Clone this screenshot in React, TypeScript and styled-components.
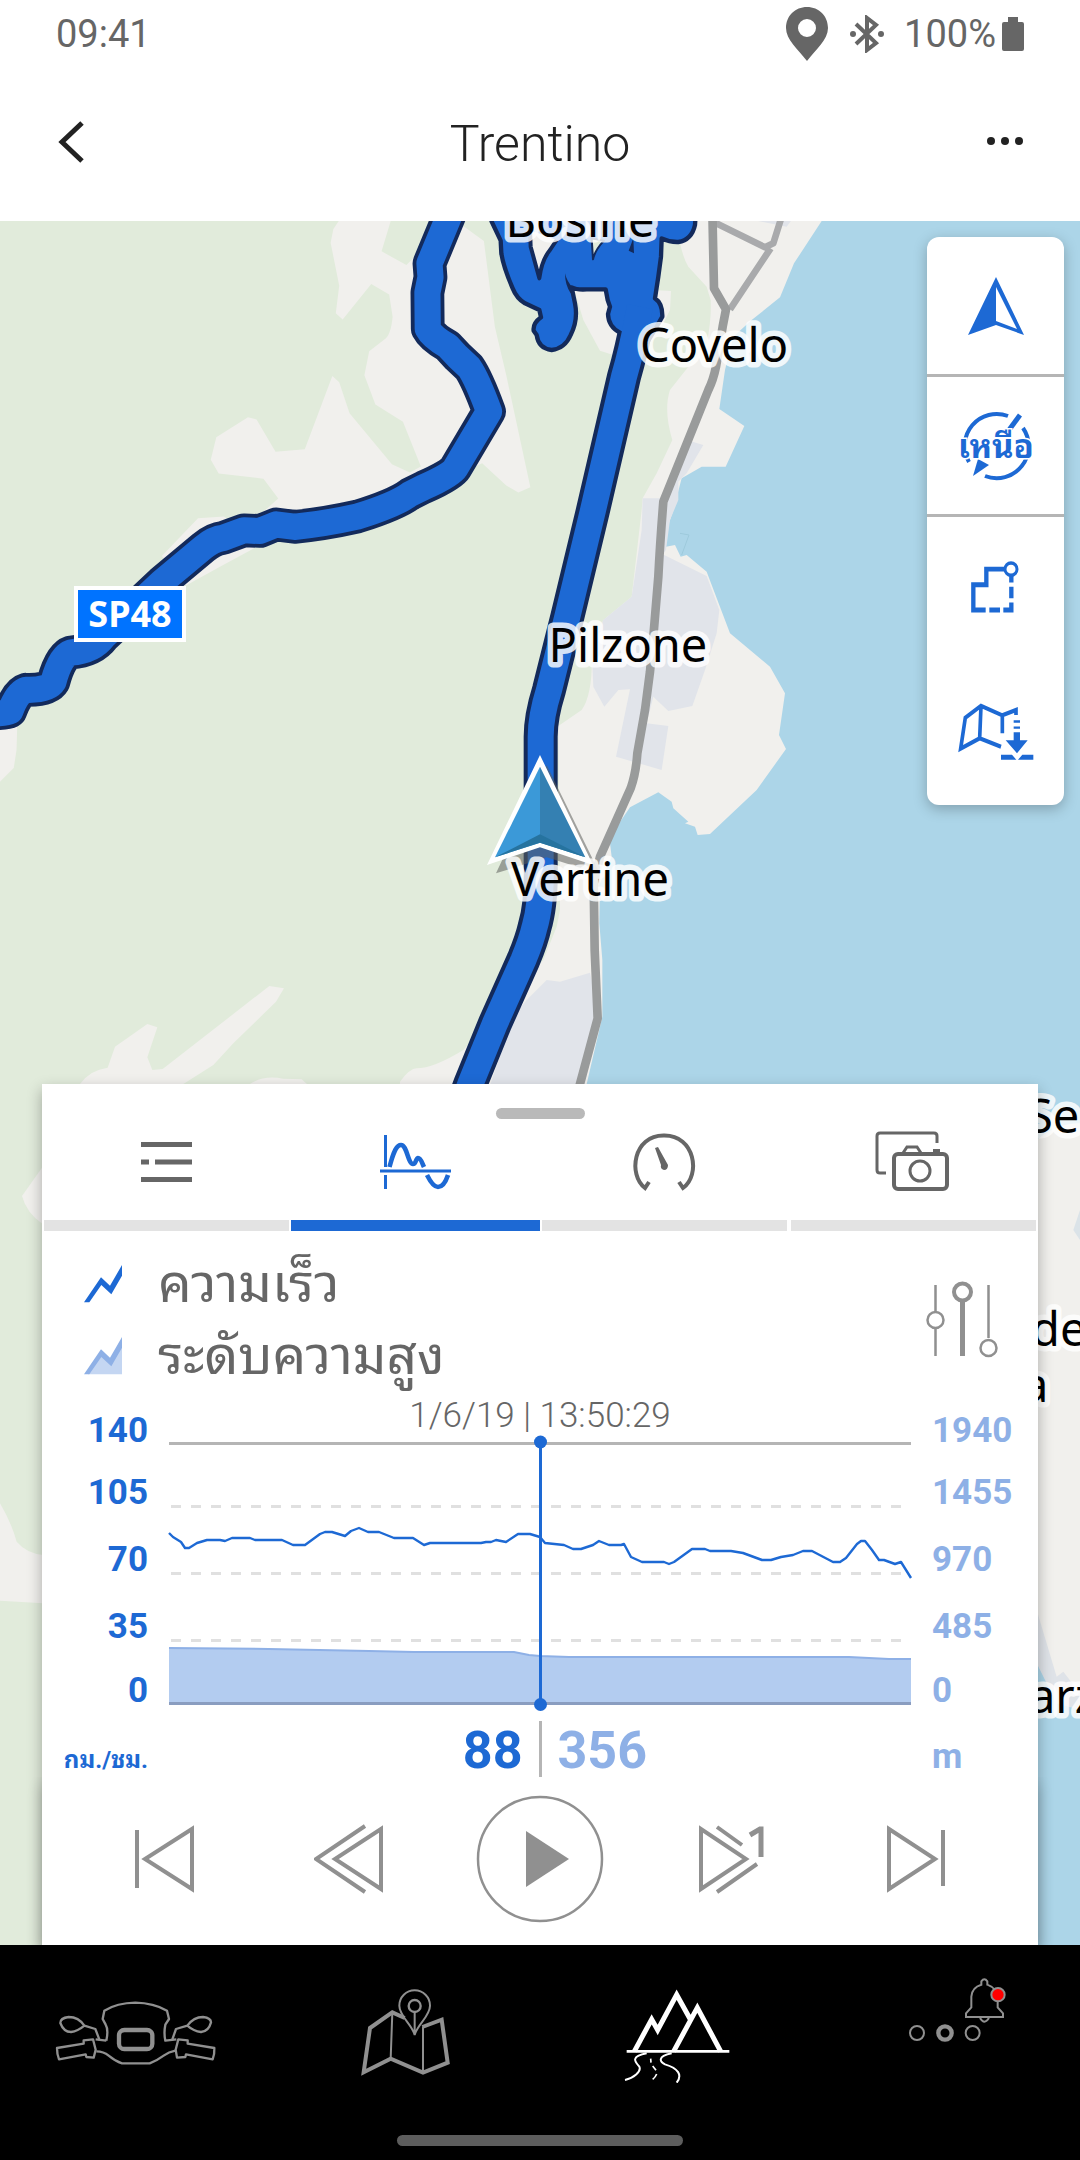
import React from "react";
import styled, { createGlobalStyle } from "styled-components";

const blue = "#1d69d4";
const paleBlue = "#8eb0e6";
const grey = "#666666";
const midGrey = "#909090";

const GlobalStyle = createGlobalStyle`
  *, *::before, *::after { box-sizing: border-box; }
  body {
    margin: 0;
    background: #ffffff;
    font-family: Roboto, "Noto Sans", "Noto Sans Thai Looped", Loma, Garuda, "Noto Sans Thai", sans-serif;
  }
  button { font: inherit; color: inherit; background: none; border: 0; padding: 0; margin: 0; cursor: pointer; }
  svg { display: block; }
`;

const Page = styled.div`
  min-height: 100vh;
  display: flex;
  flex-direction: column;
`;

const StatusBar = styled.div`
  height: 67px;
  flex: none;
  padding: 0 56px;
  display: flex;
  align-items: center;
  justify-content: space-between;
  color: ${grey};
  font-size: 38px;
  font-weight: 400;
`;

const StatusIcons = styled.div`
  display: flex;
  align-items: center;
`;

const BatteryText = styled.span`
  margin: 0 6px 0 20px;
`;

const Header = styled.header`
  height: 154px;
  flex: none;
  padding: 0 52px;
  display: grid;
  grid-template-columns: 80px 1fr 80px;
  align-items: center;
`;

const Title = styled.h1`
  margin: 0;
  text-align: center;
  font-size: 50px;
  line-height: 60px;
  font-weight: 300;
  color: #222222;
`;

const HeaderButton = styled.button<{ $end?: boolean }>`
  height: 80px;
  display: flex;
  align-items: center;
  justify-content: ${(p) => (p.$end ? "flex-end" : "flex-start")};
`;

const Stage = styled.main`
  position: relative;
  flex: 1;
  display: flex;
  flex-direction: column;
  justify-content: space-between;
  overflow: hidden;
`;

const MapCanvas = styled.svg`
  position: absolute;
  inset: 0;
  width: 100%;
  height: 100%;
  font-family: "Noto Sans", sans-serif;
`;

const Toolbar = styled.div`
  position: relative;
  align-self: flex-end;
  width: 137px;
  margin: 16px 16px 80px;
  padding-bottom: 8px;
  background: #ffffff;
  border-radius: 12px;
  box-shadow: 0 4px 14px rgba(0, 0, 0, 0.25);
`;

const ToolButton = styled.button<{ $divided?: boolean }>`
  width: 100%;
  height: 140px;
  display: flex;
  align-items: center;
  justify-content: center;
  color: ${blue};
  border-bottom: ${(p) => (p.$divided ? "3px solid #b5b5b5" : "0")};
`;

const Sheet = styled.section`
  position: relative;
  margin: 0 42px;
  background: #ffffff;
  box-shadow: 0 6px 14px rgba(0, 0, 0, 0.3);
`;

const Handle = styled.div`
  padding-top: 24px;
  display: flex;
  justify-content: center;
  &::after {
    content: "";
    width: 89px;
    height: 11px;
    border-radius: 6px;
    background: #b9b9b9;
  }
`;

const Tabs = styled.div`
  display: grid;
  grid-template-columns: repeat(4, 1fr);
`;

const Tab = styled.button<{ $active?: boolean }>`
  height: 112px;
  display: flex;
  flex-direction: column;
  align-items: center;
  justify-content: space-between;
  padding-top: 12px;
  color: ${(p) => (p.$active ? blue : grey)};
  &::after {
    content: "";
    height: 11px;
    align-self: stretch;
    margin: ${(p) => (p.$active ? "0" : "0 2px")};
    background: ${(p) => (p.$active ? blue : "#e3e3e3")};
  }
`;

const LegendBar = styled.div`
  padding: 17px 40px 0 42px;
  display: flex;
  align-items: center;
  justify-content: space-between;
`;

const LegendList = styled.ul`
  margin: 0;
  padding: 0;
  list-style: none;
`;

const LegendItem = styled.li`
  height: 72px;
  display: flex;
  align-items: center;
  gap: 36px;
  font-size: 53px;
  line-height: 72px;
  font-weight: 400;
  color: ${grey};
`;

const Chart = styled.div`
  margin-top: 6px;
  display: grid;
  grid-template-columns: 106px 1fr 106px;
  column-gap: 21px;
`;

const Scale = styled.div<{ $pale?: boolean }>`
  display: grid;
  grid-template-rows: 51px 62px 67px 67px 64px;
  align-items: end;
  text-align: ${(p) => (p.$pale ? "left" : "right")};
  color: ${(p) => (p.$pale ? paleBlue : blue)};
  font-size: 35px;
  line-height: 36px;
  font-weight: 700;
`;

const PlotColumn = styled.div`
  min-width: 0;
`;

const Moment = styled.div`
  text-align: center;
  font-size: 35px;
  line-height: 36px;
  font-weight: 300;
  color: ${grey};
`;

const Plot = styled.svg`
  width: 100%;
  height: 278px;
  overflow: visible;
`;

const Values = styled.div`
  margin-top: 9px;
  height: 56px;
  display: grid;
  grid-template-columns: 106px 1fr 3px 1fr 106px;
  align-items: baseline;
  font-weight: 700;
`;

const Unit = styled.span<{ $pale?: boolean; $small?: boolean }>`
  font-size: ${(p) => (p.$small ? "24px" : "35px")};
  line-height: 60px;
  text-align: ${(p) => (p.$pale ? "left" : "right")};
  color: ${(p) => (p.$pale ? paleBlue : blue)};
`;

const Reading = styled.span<{ $pale?: boolean }>`
  font-size: 52px;
  line-height: 60px;
  padding: 0 16px;
  text-align: ${(p) => (p.$pale ? "left" : "right")};
  color: ${(p) => (p.$pale ? paleBlue : blue)};
`;

const Divider = styled.span`
  align-self: stretch;
  background: #b5b5b5;
`;

const Playback = styled.div`
  height: 168px;
  padding: 0 29px 4px;
  display: grid;
  grid-template-columns: repeat(5, 1fr);
  align-items: center;
  background: #ffffff;
  box-shadow: 0 8px 14px rgba(0, 0, 0, 0.2);
  clip-path: inset(0 -20px);
`;

const PlayButton = styled.button`
  display: flex;
  justify-content: center;
  color: ${midGrey};
`;

const NavBar = styled.nav`
  flex: none;
  background: #000000;
  display: flex;
  flex-direction: column;
  align-items: center;
  padding-bottom: 14px;
  &::after {
    content: "";
    width: 286px;
    height: 11px;
    margin-top: 14px;
    border-radius: 6px;
    background: #5d5d5d;
  }
`;

const NavItems = styled.div`
  align-self: stretch;
  height: 176px;
  display: grid;
  grid-template-columns: repeat(4, 1fr);
`;

const NavButton = styled.button<{ $active?: boolean }>`
  display: flex;
  align-items: center;
  justify-content: center;
  color: ${(p) => (p.$active ? "#ffffff" : midGrey)};
`;

type GlyphProps = { box: string; w: number; h: number; children: React.ReactNode };

/* Line icon drawn with the current text colour. */
const Glyph = ({ box, w, h, children }: GlyphProps) => (
  <svg viewBox={box} width={w} height={h} fill="none" stroke="currentColor" aria-hidden="true">
    {children}
  </svg>
);

const westRoad =
  "M1315 -10 L1298 32 L1247 155 L1250 195 L1241 240 L1242 345 Q1255 370 1300 395 L1328 425 L1362 457 Q1385 490 1420 585 L1322 750 Q1310 770 1230 805 L1190 825 Q1150 855 1038 890 Q940 912 855 920 L802 913 L755 932 L708 930 L648 952 Q620 955 590 980 L470 1080 L300 1240 Q270 1280 205 1285 Q175 1295 155 1370 Q140 1395 75 1393 Q50 1400 30 1455 Q10 1465 -60 1460";
const lakeRoad =
  "M600 290 L592 330 Q575 420 552 500 L458 905 L382 1220 L327 1440 Q302 1520 302 1580 L302 1960 Q305 2080 284 2150 Q275 2190 250 2250 L165 2440 L91 2622 L40 2760";
const mainStreet =
  "M817 0 L822 235 L858 298 L848 350 L828 470 Q820 510 805 540 L670 875 Q660 1000 655 1100 L640 1280 L630 1385 L615 1500 L592 1630 Q588 1690 572 1735 L480 1940 L461 2020 L464 2220 L473 2425 L420 2622 L380 2760";

const mapLabels = [
  { text: "Bosine", x: 580, y: 237 },
  { text: "Covelo", x: 714, y: 362 },
  { text: "Pilzone", x: 628, y: 662 },
  { text: "Vertine", x: 590, y: 896 },
];

const edgeLabels = [
  { text: "Se", x: 1027, y: 1133 },
  { text: "de", x: 1031, y: 1346 },
  { text: "a", x: 1022, y: 1402 },
  { text: "arz", x: 1029, y: 1713 },
];

const TripMap = () => (
  <MapCanvas viewBox="0 221 1080 1724" preserveAspectRatio="xMidYMin slice" role="img" aria-label="Trentino">
    <rect x="0" y="221" width="1080" height="1724" fill="#e1ebdb" />
    <g transform="translate(0 210) scale(0.3444)" fill="#f1f0ed">
      <path d="M985 30 L968 55 L960 95 L985 220 L975 300 L995 318 L1078 215 L1130 245 L1140 310 Q1135 365 1115 377 L1072 410 L1058 480 L1090 565 L1170 615 L1222 745 L1190 762 L1138 738 L1015 590 L985 500 L965 482 L885 695 L800 702 L745 608 L720 602 L628 660 L612 725 L635 765 L765 780 L808 838 L760 880 L850 930 L1200 830 L1400 735 L1470 800 L1505 820 L1540 805 L1470 480 L1437 340 L1405 90 L1350 50 L1300 30 L1240 100 L1180 160 L1108 120 L1135 30Z" />
      <path d="M470 1005 L575 895 L650 890 L760 970 L640 1035 L540 1090Z" />
      <path d="M0 1500 L50 1500 L48 1568 L40 1620 L0 1660Z" />
    </g>
    <g transform="translate(0 950) scale(0.33333)" fill="#f1f0ed">
      <path d="M240 402 Q270 360 323 353 L345 290 L442 222 L472 232 L442 322 L457 360 L488 357 L808 108 L852 115 L828 155 L700 280 L640 345 L550 402 L400 520Z" />
      <path d="M750 402 Q790 375 850 386 L905 388 L930 410Z" />
      <path d="M128 650 L66 738 Q80 790 128 822Z" />
      <path d="M0 1660 Q35 1720 50 1775 Q80 1810 130 1815 L130 1960 L0 1952Z" />
    </g>
    <g transform="translate(440 210) scale(0.33333)">
      <path fill="#acd5e8" d="M1100 0 H1920 V5205 H420 V2622 L480 2020 L500 1700 L620 1100 L650 880 L760 700 L840 480 L850 300Z" />
      <path fill="#f1f0ed" d="M1165 0 L1145 33 L1062 160 L1020 262 L935 330 L880 380 L855 480 L838 597 L913 648 L857 770 L785 770 L725 805 L700 900 L680 960 L678 1010 L705 1005 L722 1040 L740 1035 L800 1085 L870 1270 L990 1370 L1035 1450 L1017 1575 L1038 1617 L950 1740 L810 1872 L773 1875 L765 1850 L735 1840 L745 1835 L700 1795 L695 1775 L655 1747 L570 1792 L520 1865 L510 1900 L515 1940 L480 2020 L478 2140 L487 2250 L487 2420 L440 2622 L420 2900 L-130 2900 L-120 2615 Q-90 2575 -70 2575 Q-20 2575 70 2520 L310 2250 L350 2150 L360 2100 L355 1548 L425 1500 Q460 1450 455 1320 L490 1230 L575 1160 L605 900 L608 865 L650 790 L697 690 Q670 600 690 540 L745 470 L800 400 Q815 330 812 270 L800 230 L745 170 Q720 130 710 30 V0Z" />
      <path fill="#f1f0ed" d="M400 230 L500 240 L560 340 L540 370 L520 435 L480 422 L430 330Z M640 240 L693 243 L690 300 L660 360Z" />
      <path fill="#f1f0ed" d="M1790 2790 Q1850 2740 1920 2740 V4500 L1875 4480 L1810 4380 L1790 4360Z" />
      <path fill="#dbe3e8" d="M1920 3000 L1900 3060 L1920 3090Z" />
      <path fill="#dfe3e8" d="M1790 4200 L1850 4400 L1870 4385 L1920 4450 V4500 L1850 4480 L1790 4360Z" />
      <path fill="#e1e4ea" d="M740 690 L790 705 L740 790 L715 815 L715 870 L690 930 L678 1020 L668 1033 L800 1098 L838 1200 L830 1270 L795 1380 L757 1488 L685 1503 L640 1460 L620 1540 L685 1548 L665 1680 L528 1640 L570 1438 L535 1440 L493 1490 L460 1430 L455 1320 L490 1230 L575 1160 L605 960 L608 865 L660 865Z" />
      <path fill="#e1e4ea" d="M320 2310 L360 2315 L450 2288 L480 2420 L430 2640 L145 2640 L220 2420 L260 2370Z M940 30 L1055 30 L1040 50Z" />
      <g fill="none" strokeLinejoin="round">
        <path d="M720 970 L747 975 L725 1035" stroke="#9ecadc" strokeWidth="3" />
        <path d="M815 33 L975 112 L1000 100 L1025 20 M992 115 L870 298" stroke="#a9aaac" strokeWidth="20" />
        <path d={mainStreet} stroke="#999b9b" strokeWidth="26" />
      </g>
    </g>
    <g fill="none" strokeLinejoin="round">
      <g transform="translate(0 210) scale(0.3444)">
        <path d={westRoad} stroke="#132a5b" strokeWidth="98" />
        <path d={westRoad} stroke={blue} strokeWidth="76" />
      </g>
      <g transform="translate(440 210) scale(0.33333)">
        <path d={lakeRoad} stroke="#132a5b" strokeWidth="102" />
        <path
          d="M145 0 L155 35 L182 92 L184 130 Q190 170 218 235 Q230 265 255 280 L298 300 L303 322 Q278 340 281 362 L290 375 Q295 415 335 420 Q375 415 392 375 Q415 330 405 280 L395 232 Q410 240 440 238 L497 238 L503 270 L510 290 L504 312 Q505 350 540 368 L620 400 L650 350 L667 320 Q668 280 645 265 L655 200 L663 140 L665 85 Q690 97 715 96 Q755 90 765 45 L768 0Z"
          fill={blue}
          stroke="#132a5b"
          strokeWidth="13"
        />
        <path d={lakeRoad} stroke={blue} strokeWidth="78" />
        <path d="M270 60 L272 110 L298 205 Q305 150 330 120 L350 90" fill="#f1f0ed" stroke="#132a5b" strokeWidth="12" />
        <path d="M455 85 L459 148 Q465 120 492 92Z" fill="#e1ebdb" stroke="#132a5b" strokeWidth="6" />
        <path d="M375 190 Q380 215 402 238 L392 250 Q375 225 375 190Z M580 85 L582 130 L566 122Z" fill="#132a5b" />
      </g>
    </g>
    <g transform="translate(400 650) scale(0.33333)">
      <path d="M440 345 L600 672 L440 622 L288 670Z" fill="#5f605c" fillOpacity="0.55" />
      <path d="M420 315 L579 645 L420 592 L261 645Z" fill="#ffffff" />
      <path d="M420 350 V578 L285 622Z" fill="#3b99d8" />
      <path d="M420 350 V578 L556 622Z" fill="#3480b2" />
      <path d="M285 622 L420 553 L556 622 L420 578Z" fill="#26739f" />
    </g>
    <g fontSize="47" fill="#000000" stroke="#ffffff" strokeOpacity="0.82" strokeWidth="11" strokeLinejoin="round" paintOrder="stroke">
      {mapLabels.map((l) => (
        <text key={l.text} x={l.x} y={l.y} textAnchor="middle">{l.text}</text>
      ))}
      {edgeLabels.map((l) => (
        <text key={l.text} x={l.x} y={l.y}>{l.text}</text>
      ))}
    </g>
    <rect x="76" y="588" width="108" height="52" fill="#0073ff" stroke="#ffffff" strokeWidth="4" />
    <text x="130" y="627" textAnchor="middle" fontSize="36" fontWeight="700" fill="#ffffff">SP48</text>
  </MapCanvas>
);

const speedLine =
  "0,99 4,103 12,108 16,114 20,114 28,109 38,106 51,106 56,107 63,104 81,104 86,106 113,106 124,111 136,111 151,100 156,98 163,98 176,102 182,97 190,94 199,98 210,98 225,104 244,104 255,111 261,109 312,109 317,108 322,108 327,106 337,108 349,100 361,100 371,103 376,109 395,111 404,115 412,115 424,111 430,107 440,111 452,111 455,110 462,123 473,128 495,128 500,130 505,128 523,115 536,115 541,117 562,117 574,119 593,126 602,126 612,123 624,121 634,117 643,117 664,128 671,128 677,124 688,110 692,107 696,107 703,116 710,126 715,126 726,130 732,128 742,144";
const altitudeLine = "0,214 100,215 200,217 245,218 345,218 360,221 371,222 400,223 680,223 720,225 742,225";

const TripPlot = () => (
  <Plot viewBox="0 0 742 278" preserveAspectRatio="none" role="img" aria-label="ความเร็ว, ระดับความสูง">
    <path d="M0 9.5 H742" stroke="#b5b5b5" strokeWidth="3" />
    <path d="M2 72.5 H742 M2 139.5 H742 M2 206.5 H742" stroke="#e0e0e0" strokeWidth="3" strokeDasharray="10 10" />
    <polygon points={`${altitudeLine} 742,269 0,269`} fill="#b3ccf0" />
    <polyline points={altitudeLine} fill="none" stroke={paleBlue} strokeWidth="2" />
    <path d="M0 269.5 H742" stroke="#8a9dc0" strokeWidth="3" />
    <polyline points={speedLine} fill="none" stroke={blue} strokeWidth="2.4" strokeLinejoin="round" />
    <path d="M371.5 8 V270" stroke={blue} strokeWidth="3" />
    <circle cx="371.5" cy="8" r="6.5" fill={blue} />
    <circle cx="371.5" cy="270.5" r="6.5" fill={blue} />
  </Plot>
);

const App = () => (
  <Page>
    <GlobalStyle />
    <StatusBar>
      <span>09:41</span>
      <StatusIcons>
        <svg width="42" height="54" viewBox="0 0 42 54" fill={grey} aria-hidden="true">
          <path fillRule="evenodd" d="M21 0 C9 0 0 9 0 21 C0 33 12 42 21 54 C30 42 42 33 42 21 C42 9 33 0 21 0Z M21 12 A9 9 0 1 1 21 30 A9 9 0 1 1 21 12Z" />
        </svg>
        <svg width="56" height="38" viewBox="-22 0 56 38" fill="none" stroke={grey} strokeWidth="4" aria-hidden="true">
          <path d="M6 9 L26 28 L17 35 V3 L26 10 L6 29" />
          <circle cx="3" cy="19" r="3" fill={grey} stroke="none" />
          <circle cx="31" cy="19" r="3" fill={grey} stroke="none" />
        </svg>
        <BatteryText>100%</BatteryText>
        <svg width="22" height="34" viewBox="0 0 22 34" fill={grey} aria-hidden="true">
          <path d="M6 0 H16 V5 H20 Q22 5 22 7 V32 Q22 34 20 34 H2 Q0 34 0 32 V7 Q0 5 2 5 H6Z" />
        </svg>
      </StatusIcons>
    </StatusBar>

    <Header>
      <HeaderButton aria-label="Back">
        <svg width="40" height="46" viewBox="0 0 40 46" fill="none" stroke="#222222" strokeWidth="5" aria-hidden="true">
          <path d="M30 2 L10 21 L30 40" />
        </svg>
      </HeaderButton>
      <Title>Trentino</Title>
      <HeaderButton $end aria-label="More">
        <svg width="42" height="16" viewBox="0 0 42 16" fill="#222222" aria-hidden="true">
          <circle cx="5" cy="5" r="4" />
          <circle cx="19" cy="5" r="4" />
          <circle cx="33" cy="5" r="4" />
        </svg>
      </HeaderButton>
    </Header>

    <Stage>
      <TripMap />
      <Toolbar>
        <ToolButton $divided aria-label="Position">
          <Glyph box="0 0 60 60" w={60} h={60}>
            <path d="M30 1 L58 59 L30 49 L2 59Z" fill="currentColor" stroke="none" />
            <path d="M30 11 V45 L51 53Z" fill="#ffffff" stroke="none" />
          </Glyph>
        </ToolButton>
        <ToolButton $divided aria-label="Orientation">
          <Glyph box="0 0 80 72" w={80} h={72}>
            <path d="M52 6 A32 32 0 0 0 13 52 M67 18 A32 32 0 0 1 29 66" strokeWidth="4" />
            <path d="M64 5 L53 20" strokeWidth="5" />
            <path d="M17 66 L22 49 L33 55Z" fill="currentColor" stroke="none" />
            <text x="40" y="48" textAnchor="middle" fontSize="33" fontWeight="700" fill="currentColor" stroke="#ffffff" strokeWidth="3" paintOrder="stroke">เหนือ</text>
          </Glyph>
        </ToolButton>
        <ToolButton aria-label="Route">
          <Glyph box="208 1012 156 168" w={52} h={56}>
            <g transform="scale(1 1.148)">
              <path d="M255 1015 H218 V949 H257 V908 H312" strokeWidth="13" />
              <path d="M266 1015 H298 M308 1015 H332 V995 M332 984 V954 M332 943 V924" strokeWidth="13" />
              <ellipse cx="331" cy="908" rx="18" ry="16" strokeWidth="9" />
            </g>
          </Glyph>
        </ToolButton>
        <ToolButton aria-label="Download map">
          <Glyph box="167 1415 240 207" w={80} h={69}>
            <g transform="scale(1 1.148)">
              <path d="M302 1373 L238 1351 L181 1378 L195 1297 L242 1266 L306 1291 L347 1277 V1290 M242 1266 L238 1351 M306 1291 V1338" strokeWidth="11" />
              <path d="M340 1307 H359 M340 1323 H359" strokeWidth="6" />
              <path d="M340 1335 H359 V1356 H382 L350 1390 L316 1356 H340Z" fill="currentColor" stroke="none" />
              <path d="M302 1394 H335 L348 1407 H302Z M399 1394 H366 L353 1407 H399Z" fill="currentColor" stroke="none" />
            </g>
          </Glyph>
        </ToolButton>
      </Toolbar>

      <Sheet>
        <Handle />
        <Tabs role="tablist">
          <Tab role="tab" aria-selected={false} aria-label="List">
            <Glyph box="127 1131 80 62" w={80} h={62}>
              <path d="M141 1144.5 H192 M141 1162 H149 M155 1162 H192 M141 1179.5 H192" strokeWidth="5" />
            </Glyph>
          </Tab>
          <Tab $active role="tab" aria-selected aria-label="Chart">
            <Glyph box="376 1131 80 62" w={80} h={62}>
              <path d="M385.5 1135 V1167 M385.5 1175 V1189 M380 1171 H451" strokeWidth="3" />
              <path d="M389.5 1167 C394 1150 397 1145 401 1145 C407 1145 408 1164 413 1164 C416 1164 416 1158 418 1158 C421 1158 422 1163 424 1167 M427 1175 C432 1185 435 1187 438 1187 C441 1187 445 1184 448 1175" strokeWidth="4.6" />
            </Glyph>
          </Tab>
          <Tab role="tab" aria-selected={false} aria-label="Gauge">
            <Glyph box="625 1131 80 62" w={80} h={62}>
              <path d="M649 1182 L645 1188 C628 1175 633 1135 664 1135.5 C695 1135 701 1175 683 1188 L679 1182" strokeWidth="4" />
              <path d="M655 1148 L658 1147 L668 1165 Q668 1170 664 1170 Q660 1169 661 1165Z" fill="currentColor" stroke="none" />
            </Glyph>
          </Tab>
          <Tab role="tab" aria-selected={false} aria-label="Photos">
            <Glyph box="875 1131 80 62" w={80} h={62}>
              <path d="M887 1173 H881 Q878 1173 878 1170 V1136 Q878 1133 881 1133 H935 Q938 1133 938 1136 V1143" strokeWidth="3" />
              <path d="M904 1153 L908 1147 H918 L922 1153" strokeWidth="3" />
              <rect x="895" y="1154" width="53" height="35" rx="4" strokeWidth="4" />
              <circle cx="921" cy="1171" r="10" strokeWidth="3" />
              <path d="M934 1151 H941" strokeWidth="4" />
            </Glyph>
          </Tab>
        </Tabs>

        <LegendBar>
          <LegendList>
            <LegendItem>
              <svg width="38" height="38" viewBox="0 0 114 114" fill={blue} aria-hidden="true">
                <path d="M0 112 L51 37 L78 62 L114 0 V32 L82 88 L52 60 L16 112Z" />
              </svg>
              ความเร็ว
            </LegendItem>
            <LegendItem>
              <svg width="38" height="38" viewBox="0 0 114 114" fill={paleBlue} aria-hidden="true">
                <path d="M12 112 L52 55 L80 80 L114 20 V112Z" fill="#c4d6f2" />
                <path d="M0 112 L51 37 L78 62 L114 0 V32 L82 88 L52 60 L16 112Z" />
              </svg>
              ระดับความสูง
            </LegendItem>
          </LegendList>
          <PlayButton aria-label="Chart settings">
            <Glyph box="0 0 72 80" w={72} h={80}>
              <path d="M9.5 5 V31 M9.5 48 V76 M62.5 5 V58" strokeWidth="2.5" />
              <path d="M36.5 20 V76" strokeWidth="5" />
              <circle cx="36.5" cy="12" r="8.5" strokeWidth="4" />
              <circle cx="9.5" cy="40" r="8" strokeWidth="2.5" />
              <circle cx="62.5" cy="68" r="8" strokeWidth="2.5" />
            </Glyph>
          </PlayButton>
        </LegendBar>

        <Chart>
          <Scale>
            {["140", "105", "70", "35", "0"].map((v) => (
              <span key={v}>{v}</span>
            ))}
          </Scale>
          <PlotColumn>
            <Moment>1/6/19 | 13:50:29</Moment>
            <TripPlot />
          </PlotColumn>
          <Scale $pale>
            {["1940", "1455", "970", "485", "0"].map((v) => (
              <span key={v}>{v}</span>
            ))}
          </Scale>
        </Chart>

        <Values>
          <Unit $small>กม./ชม.</Unit>
          <Reading>88</Reading>
          <Divider />
          <Reading $pale>356</Reading>
          <Unit $pale>m</Unit>
        </Values>

        <Playback>
          <PlayButton aria-label="Previous">
            <Glyph box="0 0 66 76" w={66} h={76}>
              <path d="M5 9 V67" strokeWidth="4" />
              <path d="M60 8 V68 L13 38Z" strokeWidth="4" />
            </Glyph>
          </PlayButton>
          <PlayButton aria-label="Rewind">
            <Glyph box="4 0 76 76" w={76} h={76}>
              <path d="M71 8 V68 L25 38Z M55 5 L6 38 L55 71" strokeWidth="4" />
            </Glyph>
          </PlayButton>
          <PlayButton aria-label="Play">
            <Glyph box="0 0 128 128" w={128} h={128}>
              <circle cx="64" cy="64" r="62" strokeWidth="2.5" />
              <path d="M50 36 L93 64 L50 92Z" fill="currentColor" stroke="none" />
            </Glyph>
          </PlayButton>
          <PlayButton aria-label="Fast forward">
            <Glyph box="-7 0 76 76" w={76} h={76}>
              <path d="M4 8 V68 L49 38Z M20 6 L45 24 M20 71 L60 43" strokeWidth="4" />
              <path d="M53 14 L63 8 H64 V36" strokeWidth="5" />
            </Glyph>
          </PlayButton>
          <PlayButton aria-label="Next">
            <Glyph box="-3 0 66 76" w={66} h={76}>
              <path d="M4 8 V68 L50 38Z" strokeWidth="4" />
              <path d="M58 9 V65" strokeWidth="4" />
            </Glyph>
          </PlayButton>
        </Playback>
      </Sheet>
    </Stage>

    <NavBar>
      <NavItems>
        <NavButton aria-label="Motorcycle">
          <Glyph box="35 85 501 210" w={167} h={70}>
            <g strokeWidth="7" strokeLinejoin="round">
              <path d="M198 213 L166 209 M198 213 Q205 180 196 165 L187 148 L192 123 Q230 100 285 99 Q340 100 380 123 L386 148 L375 165 Q370 190 375 213 L408 209" />
              <path d="M168 245 Q190 245 205 258 Q225 275 245 281 H328 Q350 273 370 258 Q385 247 405 243" />
              <path d="M132 168 Q115 142 85 142 Q60 145 60 160 Q70 187 92 187 Q112 185 132 168Z L165 178 L178 212" />
              <path d="M441 168 Q460 142 488 142 Q512 145 512 158 Q505 185 482 187 Q460 185 441 168Z L407 178 L395 212" />
              <path d="M130 222 L50 235 Q50 255 56 269 L136 254 L138 262 L160 264 L166 240 L158 209 L130 212Z" />
              <path d="M442 222 L522 235 Q523 255 517 269 L437 254 L435 262 L410 264 L406 240 L414 209 L442 212Z" />
            </g>
            <rect x="236" y="181" width="100" height="57" rx="16" strokeWidth="13" />
          </Glyph>
        </NavButton>
        <NavButton aria-label="Map">
          <Glyph box="955 52 279 276" w={93} h={92}>
            <path d="M1092 145 L1055 128 L988 175 L969 308 L1050 267 L1147 309 L1221 279 L1203 150 L1145 172" strokeWidth="12" />
            <path d="M1055 128 L1050 267 M1147 172 V305" strokeWidth="6" />
            <path d="M1122 196 C1115 165 1076 140 1076 108 A46 46 0 0 1 1168 108 C1168 140 1129 165 1122 196Z M1122 128 V190" strokeWidth="6" />
            <circle cx="1122" cy="109" r="18" strokeWidth="7" />
          </Glyph>
        </NavButton>
        <NavButton $active aria-label="Trips">
          <Glyph box="60 69 330 300" w={110} h={100}>
            <path d="M80 274 H388" strokeWidth="8" />
            <path d="M103 274 L155 178 L173 210 L230 104 L272 180 M221 274 L292 143 L362 274" strokeWidth="15" />
            <path d="M140 280 C90 290 105 305 118 320 C125 335 100 355 75 360 M215 280 C170 290 180 305 195 313 C235 325 248 345 230 368" strokeWidth="6" />
            <path d="M152 296 L153 308 M158 318 L168 331 M170 342 Q166 352 158 358" strokeWidth="5" />
          </Glyph>
        </NavButton>
        <NavButton aria-label="More, new notifications">
          <Glyph box="849 39 372 360" w={124} h={120}>
            <circle cx="951" cy="219" r="21" strokeWidth="6" />
            <circle cx="1035" cy="219" r="20" strokeWidth="13" />
            <circle cx="1118" cy="219" r="21" strokeWidth="6" />
            <path d="M1144 74 V64 Q1153 52 1162 64 V74 Q1192 84 1193 120 V142 L1209 160 V171 H1098 V160 L1114 142 V110 Q1116 82 1144 74Z M1140 174 Q1153 196 1167 174" strokeWidth="6" />
            <circle cx="1194" cy="104" r="20" fill="#ff0000" strokeWidth="6" />
          </Glyph>
        </NavButton>
      </NavItems>
    </NavBar>
  </Page>
);

export default App;
